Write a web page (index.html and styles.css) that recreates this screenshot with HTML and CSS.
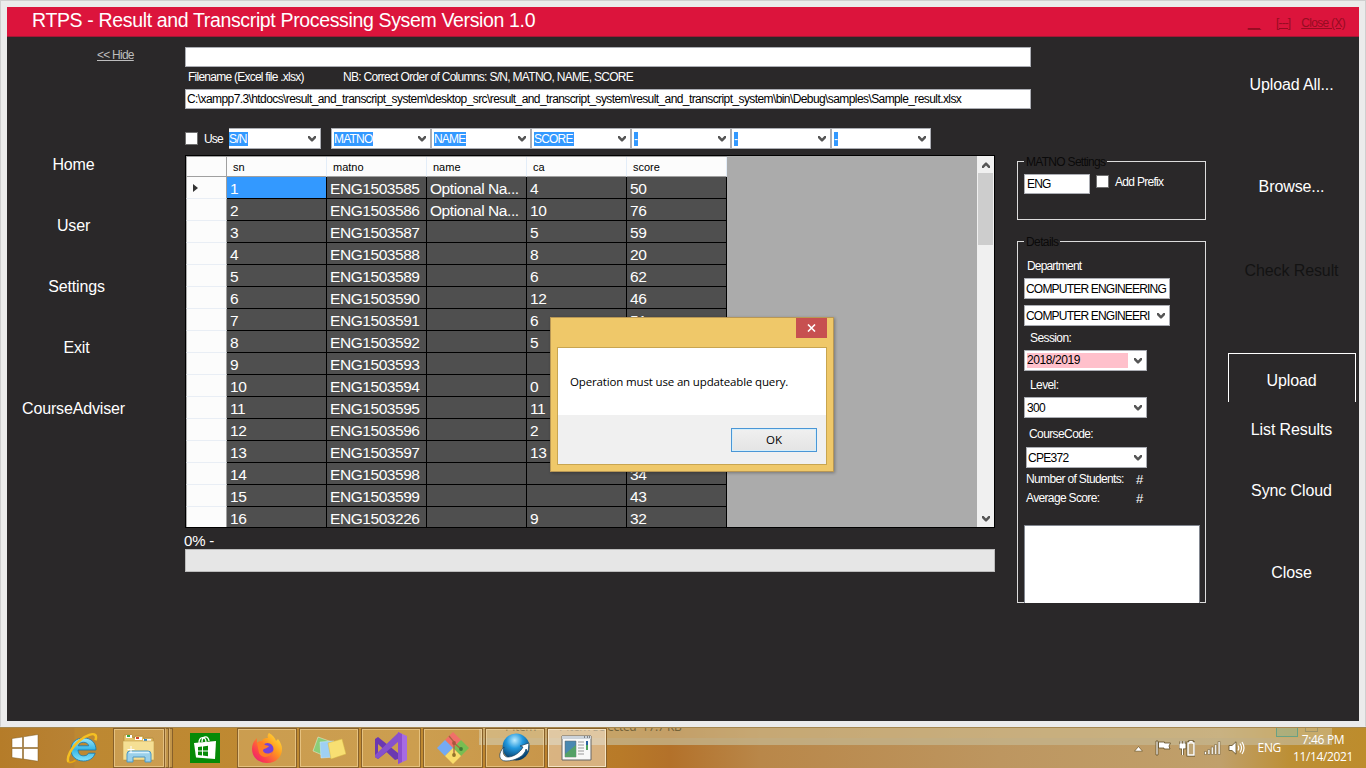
FILE: index.html
```html
<!DOCTYPE html>
<html lang="en">
<head>
<meta charset="utf-8">
<title>RTPS</title>
<link rel="stylesheet" href="styles.css">
</head>
<body>
<svg width="0" height="0" class="defs"><symbol id="chev" viewBox="0 0 8 6"><path d="M0 0h1.600L4 2.500 6.400 0H8v2L4.600 5.400H3.400L0 2z" fill="#555"/></symbol></svg>
<div class="window">
  <header class="titlebar">
    <h1 class="title">RTPS - Result and Transcript Processing Sysem Version 1.0</h1>
    <div class="winlinks"><a class="min">__</a><a class="max">[---]</a><a class="cls">Close (X)</a></div>
  </header>
  <div class="content">
    <nav class="nav">
      <a class="hide">&lt;&lt; Hide</a>
      <a class="navitem">Home</a>
      <a class="navitem">User</a>
      <a class="navitem shift">Settings</a>
      <a class="navitem shift">Exit</a>
      <a class="navitem">CourseAdviser</a>
    </nav>
    <main class="main">
      <div class="field"></div>
      <div class="labels"><span class="fn">Filename (Excel file .xlsx)</span><span class="nb">NB: Correct Order of Columns: S/N, MATNO, NAME, SCORE</span></div>
      <div class="field path">C:\xampp7.3\htdocs\result_and_transcript_system\desktop_src\result_and_transcript_system\result_and_transcript_system\bin\Debug\samples\Sample_result.xlsx</div>
      <div class="columns">
        <section class="left">
          <div class="mapping">
            <i class="check"></i><span class="use">Use</span>
            <div class="combo first"><mark>S/N</mark><svg class="chev"><use href="#chev"/></svg></div>
            <div class="combo"><mark>MATNO</mark><svg class="chev"><use href="#chev"/></svg></div>
            <div class="combo"><mark>NAME</mark><svg class="chev"><use href="#chev"/></svg></div>
            <div class="combo"><mark>SCORE</mark><svg class="chev"><use href="#chev"/></svg></div>
            <div class="combo"><mark>-</mark><svg class="chev"><use href="#chev"/></svg></div>
            <div class="combo"><mark>-</mark><svg class="chev"><use href="#chev"/></svg></div>
            <div class="combo"><mark>-</mark><svg class="chev"><use href="#chev"/></svg></div>
          </div>
          <div class="datagrid">
            <div class="rows">
              <div class="row head"><b></b><span>sn</span><span>matno</span><span>name</span><span>ca</span><span>score</span></div>
              <div class="row"><b><svg width="5" height="8" viewBox="0 0 5 8"><path d="M0 0l5 4-5 4z" fill="#333"/></svg></b><span class="sel">1</span><span>ENG1503585</span><span>Optional Na...</span><span>4</span><span>50</span></div>
              <div class="row"><b></b><span>2</span><span>ENG1503586</span><span>Optional Na...</span><span>10</span><span>76</span></div>
              <div class="row"><b></b><span>3</span><span>ENG1503587</span><span></span><span>5</span><span>59</span></div>
              <div class="row"><b></b><span>4</span><span>ENG1503588</span><span></span><span>8</span><span>20</span></div>
              <div class="row"><b></b><span>5</span><span>ENG1503589</span><span></span><span>6</span><span>62</span></div>
              <div class="row"><b></b><span>6</span><span>ENG1503590</span><span></span><span>12</span><span>46</span></div>
              <div class="row"><b></b><span>7</span><span>ENG1503591</span><span></span><span>6</span><span>51</span></div>
              <div class="row"><b></b><span>8</span><span>ENG1503592</span><span></span><span>5</span><span></span></div>
              <div class="row"><b></b><span>9</span><span>ENG1503593</span><span></span><span></span><span></span></div>
              <div class="row"><b></b><span>10</span><span>ENG1503594</span><span></span><span>0</span><span></span></div>
              <div class="row"><b></b><span>11</span><span>ENG1503595</span><span></span><span>11</span><span></span></div>
              <div class="row"><b></b><span>12</span><span>ENG1503596</span><span></span><span>2</span><span></span></div>
              <div class="row"><b></b><span>13</span><span>ENG1503597</span><span></span><span>13</span><span></span></div>
              <div class="row"><b></b><span>14</span><span>ENG1503598</span><span></span><span></span><span>34</span></div>
              <div class="row"><b></b><span>15</span><span>ENG1503599</span><span></span><span></span><span>43</span></div>
              <div class="row"><b></b><span>16</span><span>ENG1503226</span><span></span><span>9</span><span>32</span></div>
            </div>
            <div class="scroll">
              <svg class="chev up"><use href="#chev"/></svg>
              <div class="thumb"></div>
              <svg class="chev down"><use href="#chev"/></svg>
            </div>
          </div>
          <div class="status">0% -</div>
          <div class="progress"></div>
        </section>
        <aside class="side">
          <div class="group matno">
            <span class="legend">MATNO Settings</span>
            <div class="field eng">ENG</div><i class="check"></i><span class="prefix">Add Prefix</span>
          </div>
          <div class="group details">
            <span class="legend">Details</span>
            <label class="lbl dept">Department</label>
            <div class="combo wide">COMPUTER ENGINEERING</div>
            <div class="combo wide second"><span class="cut">COMPUTER ENGINEERI</span><svg class="chev"><use href="#chev"/></svg></div>
            <label class="lbl in">Session:</label>
            <div class="combo mid"><span class="pink">2018/2019</span><svg class="chev"><use href="#chev"/></svg></div>
            <label class="lbl in level">Level:</label>
            <div class="combo mid"><span class="num">300</span><svg class="chev"><use href="#chev"/></svg></div>
            <label class="lbl in code">CourseCode:</label>
            <div class="combo mid course"><span class="num">CPE372</span><svg class="chev"><use href="#chev"/></svg></div>
            <div class="stat"><span class="stu">Number of Students:</span><span class="hash">#</span></div>
            <div class="stat"><span>Average Score:</span><span class="hash">#</span></div>
            <div class="memo"></div>
          </div>
        </aside>
      </div>
    </main>
    <div class="actions">
      <a class="act a1">Upload All...</a>
      <a class="act a2">Browse...</a>
      <a class="act a3">Check Result</a>
      <a class="act a4">Upload</a>
      <a class="act a5">List Results</a>
      <a class="act a6">Sync Cloud</a>
      <a class="act a7">Close</a>
    </div>
  </div>
</div>

<div class="dialog">
  <div class="dlgbar"><div class="dlgx"><svg width="9" height="8" viewBox="0 0 9 8"><path d="M1 .5l7 7M8 .5l-7 7" stroke="#fff" stroke-width="1.600"/></svg></div></div>
  <div class="dlgbody">
    <div class="msg">Operation must use an updateable query.</div>
    <div class="dlgfoot"><button class="ok">OK</button></div>
  </div>
</div>

<footer class="taskbar">
  <div class="ghost"><span class="g1">1 item</span><span class="g2">1 item selected&nbsp; 17.7 KB</span><i class="gv"></i><i class="gl"></i></div>
  <div class="task start"><svg width="28" height="28" viewBox="0 0 28 28"><path d="M1 4.500L11.500 3v10.500H1zM12.500 2.800L27 .5v13H12.500zM1 14.500h10.500V25L1 23.500zM12.500 14.500H27v12.800l-14.500-2.200z" fill="#fff" stroke="#7d5a20" stroke-width=".5"/></svg></div>
  <div class="task ie"><svg width="32" height="32" viewBox="0 0 32 32"><defs><linearGradient id="ieg" x2="0" y2="1"><stop stop-color="#9be6fa"/><stop offset=".5" stop-color="#35b5e6"/><stop offset="1" stop-color="#86e2fa"/></linearGradient></defs><path d="M30 18H12c.4 4 2.200 5.800 5.500 5.800 2.500 0 4-.8 5-2.600h6.700c-1.700 5-6 7.800-11.700 7.800C10 29 5 24.300 5 17.500S10 6 17.500 6C25.500 6 30 10.800 30 18zM12.200 13.800h10.500c-.6-2.300-2.400-3.500-5.200-3.500s-4.700 1.200-5.300 3.500z" fill="url(#ieg)" stroke="#1777ad" stroke-width=".8"/><path d="M2.500 30C.2 26 5 15.500 14 8.200 20.500 3 27 .8 29.200 3c1 1 1 3 .2 5.200" fill="none" stroke="#f5c022" stroke-width="2.500"/><path d="M2.500 30c1.400 1 4 .3 7-1.600" fill="none" stroke="#e9a80d" stroke-width="1.700"/></svg></div>
  <div class="task btn exp"><svg width="34" height="32" viewBox="0 0 34 32"><path d="M2 5V3h8l1 3h2V4h8l1 3 1-1h8v22H2z" fill="#e5c36b" stroke="#a88537" stroke-width=".6"/><path d="M4 3h6v3H4z" fill="#fff"/><path d="M5 3h3v2H5z" fill="#35a845"/><path d="M13 5h7v3h-7z" fill="#fff"/><path d="M14 5h3v2h-3z" fill="#d4462c"/><path d="M21 7h8v3h-8z" fill="#fff"/><path d="M22 7h3v2h-3z" fill="#2e8ad0"/><path d="M1 9h31v19H1z" fill="#f5df94" stroke="#c29f4c" stroke-width=".6"/><path d="M5 30V22q0-3 3-3h18q3 0 3 3v8h-6v-5H11v5z" fill="#9ad0ea" stroke="#4c97c2" stroke-width="1"/><path d="M7 20.500h20" stroke="#d9f2fc" stroke-width="1.500"/><path d="M9 14v7M5.500 17.500h7" stroke="#fff" stroke-width="1"/></svg></div><i class="stack"></i><i class="stack"></i>
  <div class="task store"><svg width="30" height="30" viewBox="0 0 30 30"><path d="M0 0h30v30H0z" fill="#068a07"/><path d="M4 10l22-2-1 18L6 24.500z" fill="#fff"/><path d="M9 10c0-7 7-7 7-1M12 9c0-6 6-7 7-1" fill="none" stroke="#fff" stroke-width="1.300"/><path d="M8 14l4-.5v4H8zM13 13.400l5-.6v4.700h-5zM8 18.500h4v4l-4-.5zM13 18.500h5v4.700l-5-.6z" fill="#068a07"/></svg></div>
  <div class="task btn ff"><svg width="32" height="32" viewBox="0 0 32 32"><defs><linearGradient id="ffg" x1="1" x2="0" y2="1"><stop stop-color="#fff044"/><stop offset=".4" stop-color="#ff9a1e"/><stop offset=".75" stop-color="#fb3b50"/><stop offset="1" stop-color="#e31587"/></linearGradient></defs><path d="M18 1c4 2 6 5 7 8l2-2c3 4 4 7 4 10 0 8-6 14-15 14S1 25 1 17c0-5 2-8 5-11v5c2-2 3-2 5-2 1-3 4-3 6-3-1-2 0-4 1-5z" fill="url(#ffg)"/><circle cx="16.500" cy="17" r="6" fill="#7542d9"/><path d="M6 11c3-2 6-1 8 2l4 1c-2 3-5 2-6 4 0 4 6 5 10 1-2 7-11 8-14 2" fill="#ff7d25"/></svg></div>
  <div class="task btn"><svg width="34" height="30" viewBox="0 0 34 30"><path d="M6 4l14 5-5 15L1 18z" fill="#8bcd78" stroke="#fff" stroke-width=".4"/><path d="M8 9l14-1 1 16-14 1z" fill="#9fd0f3" stroke="#cdeafb" stroke-width=".5"/><path d="M16 10l14-4 4 15-15 5z" fill="#f8df72" stroke="#d7b746" stroke-width=".5"/></svg></div>
  <div class="task btn"><svg width="32" height="32" viewBox="0 0 32 32"><path d="M0 7l3-2 20 16v6l-3 1L3 12v9l6-5 4 3L3 27l-3-2z" fill="#6b38b0"/><path d="M23 1v9L3 27l-3-2v-2z" fill="#8651cc"/><path d="M23 0l9 4v24l-9 4z" fill="#a66be4"/><path d="M23 0l4 2v28l-4 2z" fill="#8c4ed0"/></svg></div>
  <div class="task btn"><svg width="32" height="32" viewBox="0 0 32 32"><path d="M16 0l8 8-8 8-8-8z" fill="#f16f69"/><path d="M8 8l8 8-8 8-8-8z" fill="#75aaf3"/><path d="M24 8l8 8-8 8-8-8z" fill="#78bd52"/><path d="M16 16l8 8-8 8-8-8z" fill="#f9dc6b"/><path d="M12 4l5 6v13M17 11l7 6" fill="none" stroke="#a8653f" stroke-width="1.300"/><circle cx="17" cy="11" r="1.900" fill="#a8553f"/><circle cx="24" cy="17" r="1.900" fill="#417b34"/><circle cx="17" cy="23" r="1.900" fill="#93742a"/></svg></div>
  <div class="task btn"><svg width="32" height="30" viewBox="0 0 32 30"><defs><radialGradient id="glo" cx=".45" cy=".25" r=".75"><stop stop-color="#bcecff"/><stop offset=".4" stop-color="#2299df"/><stop offset="1" stop-color="#03355e"/></radialGradient></defs><circle cx="17" cy="14" r="13.500" fill="url(#glo)"/><path d="M5 14C-1 20-1 28 7 28c9 0 19-5 20-12l2 3 1-9-9 3 3 1c-3 6-10 10-15 10-4 0-6-4-4-10z" fill="#fff" stroke="#173d59" stroke-width=".7"/></svg></div>
  <div class="task btn active"><svg width="32" height="28" viewBox="0 0 32 28"><path d="M1 2h29v24H1z" fill="#f9f9f9" stroke="#666" stroke-width="1"/><path d="M1 2h29v3H1z" fill="#ccd3db"/><path d="M23 3h1m2 0h1m1 0h1" stroke="#333"/><path d="M4 7h11v16H4z" fill="#4988b1" stroke="#666" stroke-width=".5"/><path d="M4 20L15 11v12H4z" fill="#55a067"/><path d="M17 8h6m-6 3h6m-6 3h6m-6 3h6m-6 3h6" stroke="#999"/><path d="M25 7h2v8h-2z" fill="#2962a0"/><path d="M25 11h2v5h-2z" fill="#4fa45d"/></svg></div>
  <div class="tray">
    <svg class="arr" width="9" height="6" viewBox="0 0 9 6"><path d="M4.500 .5l4 4.700h-8z" fill="#fff" stroke="#6c5525" stroke-width=".7"/></svg>
    <svg class="flag" width="17" height="16" viewBox="0 0 17 16"><path d="M1 1h2v14H1zM3.500 2h6v1h6l-1.500 3 1 3H9V8H3.500z" fill="#fff" stroke="#5f4c24" stroke-width=".8"/></svg>
    <svg class="bat" width="16" height="17" viewBox="0 0 16 17"><path d="M1 4h5v4H1zM2 1v3m3-3v3M3.500 8v7" fill="#fff" stroke="#5f4c24" stroke-width="2.600"/><path d="M1 4h5v4H1zM2 1v3m3-3v3M3.500 8v7" fill="#fff" stroke="#fff" stroke-width="1.200"/><path d="M9 3h2V1.500h2V3h2v12H9z" fill="none" stroke="#5f4c24" stroke-width="3"/><path d="M9 3h2V1.500h2V3h2v12H9z" fill="#bfa576" stroke="#fff" stroke-width="1.500"/></svg>
    <svg class="sig" width="17" height="14" viewBox="0 0 17 14"><path d="M.5 10.500h2v3h-2zM3.900 8.500h2v5h-2zM7.300 6h2v7.500h-2zM10.700 3.500h2v10h-2zM14.100 .5h2v13h-2z" fill="#fff" stroke="#5f4c24" stroke-width=".5"/></svg>
    <svg class="snd" width="17" height="14" viewBox="0 0 17 14"><path d="M1 4.500h3L8 .8v12.400L4 9.500H1z" fill="#fff" stroke="#5f4c24" stroke-width=".8"/><path d="M10 4.500q1.500 2.500 0 5M12 2.500q3 4.500 0 9M14 1q4 6 0 12" fill="none" stroke="#fff" stroke-width="1.200"/></svg>
    <span class="lang">ENG</span>
    <div class="clock"><span class="time">7:46 PM</span><span class="date">11/14/2021</span></div>
  </div>
</footer>
</body>
</html>
```
FILE: styles.css
```css
* { box-sizing: border-box; }
body { margin: 0; width: 1366px; height: 768px; overflow: hidden; position: relative; background: #ebebeb; font-family: "Liberation Sans", Arial, sans-serif; font-size: 12px; line-height: 14px; color: #fff; letter-spacing: -0.6px; }
.defs { position: absolute; }
.window { height: 727px; padding: 6px 6px 5px; border: 1px solid #cfcfcf; border-bottom-color: #ebebeb; background: #ebebeb; display: flex; flex-direction: column; }
.titlebar { height: 30px; background: #dc143c; border-bottom: 1px solid #a31734; display: flex; justify-content: space-between; }
.title { margin: 0; padding: 2px 0 0 25px; font-size: 19.5px; line-height: 22px; font-weight: 400; letter-spacing: -0.35px; white-space: nowrap; }
.winlinks { display: flex; padding: 9px 14px 0 0; color: #960c22; text-decoration: underline; letter-spacing: -0.5px; }
.winlinks .min { margin-right: 16px; }
.winlinks .max { margin-right: 11px; letter-spacing: -0.9px; }
.winlinks .cls { letter-spacing: -0.7px; }
.content { flex: 1; background: #2a2829; display: flex; }

.nav { width: 178px; display: flex; flex-direction: column; font-size: 16px; letter-spacing: -0.15px; }
.hide { padding-left: 90px; margin: 11px 0 79px; font-size: 12px; letter-spacing: -0.75px; color: #bdbdbd; text-decoration: underline; }
.navitem { width: 133px; height: 48px; margin-bottom: 13px; line-height: 48px; text-align: center; }
.shift { padding-left: 6px; }

.main { width: 1028px; padding-top: 10px; }
.field { width: 846px; height: 20px; background: #fff; border: 1px solid #abadb3; color: #000; padding-left: 2px; line-height: 18px; white-space: nowrap; }
.path { letter-spacing: -0.59px; padding-left: 1px; }
.labels { height: 22px; line-height: 20px; display: flex; padding-left: 3px; white-space: nowrap; }
.fn { width: 155px; letter-spacing: -0.75px; }
.nb { letter-spacing: -0.7px; }
.columns { display: flex; padding-top: 19px; }
.left { width: 810px; }
.mapping { height: 21px; display: flex; align-items: center; margin-bottom: 6px; width: 746px; }
.check { width: 13px; height: 13px; background: #fff; border: 1px solid #707070; margin-top: -1px; flex: none; }
.use { width: 28px; padding-left: 6px; letter-spacing: -0.8px; }
.combo { width: 100px; height: 21px; background: #fff; border: 1px solid #abadb3; color: #000; display: flex; align-items: center; justify-content: space-between; padding: 0 4px 0 2px; white-space: nowrap; line-height: 14px; flex: none; letter-spacing: -0.8px; }
.combo.first { width: 92px; margin-right: 10px; margin-left: 3px; border-left: 0; padding-left: 0; }
.combo mark { background: #3399ff; color: #fff; padding-right: 1px; }
.chev { width: 8px; height: 6px; display: block; flex: none; margin-top: 1px; }

.datagrid { height: 373px; border: 1px solid #000; background: #ababab; display: flex; justify-content: space-between; overflow: hidden; }
.rows { width: 541px; }
.row { display: flex; height: 22px; font-size: 15.5px; line-height: 23px; letter-spacing: -0.44px; }
.row b { width: 41px; border-left: 1px solid #aaa; border-right: 1px solid #a0a0a0; border-bottom: 1px solid #e9eef5; background: #fcfcfc; display: flex; align-items: center; padding-left: 6px; }
.row span { width: 100px; padding-left: 3px; background: #4f4f4f; border-right: 1px solid #000; border-bottom: 1px solid #000; overflow: hidden; white-space: nowrap; }
.row .sel { background: #3399ff; }
.row.head { height: 21px; border-top: 1px solid #a0a0a0; font-size: 11px; line-height: 21px; letter-spacing: 0; color: #000; }
.head b, .row.head span { background: #fcfcfc; border-bottom: 1px solid #a0a0a0; }
.row.head span { border-right: 1px solid #e3edf8; padding-left: 6px; }
.scroll { width: 17px; background: #f0f0f0; display: flex; flex-direction: column; align-items: center; }
.scroll .up { transform: rotate(180deg); margin: 6px 0 5px; }
.thumb { width: 15px; height: 72px; background: #cdcdcd; }
.scroll .down { margin-top: auto; margin-bottom: 5px; }
.status { height: 21px; line-height: 26px; font-size: 15px; letter-spacing: -0.2px; margin-left: -1px; }
.progress { height: 23px; background: #e6e6e6; border: 1px solid #bcbcbc; }

.side { width: 189px; margin-left: 22px; padding-top: 33px; }
.group { position: relative; border: 1px solid #dcdcdc; }
.legend { position: absolute; left: 6px; top: -7px; padding: 0 2px; background: #2a2829; color: #0a0a0a; white-space: nowrap; }
.matno { height: 59px; display: flex; padding: 12px 6px; margin-bottom: 21px; }
.matno .legend { letter-spacing: -0.7px; }
.eng { width: 66px; margin-right: 6px; letter-spacing: -0.8px; }
.matno .check { margin-top: 1px; }
.prefix { padding-left: 6px; line-height: 16px; letter-spacing: -0.7px; }
.details { height: 362px; padding: 17px 5px 0 6px; display: flex; flex-direction: column; }
.lbl { height: 24px; line-height: 24px; flex: none; }
.dept { padding-left: 3px; height: 19px; line-height: 14px; letter-spacing: -0.85px; }
.wide { width: 146px; padding-left: 1px; }
.second { margin-top: 6px; }
.in { padding-left: 6px; }
.mid { width: 123px; }
.level { height: 26px; line-height: 28px; }
.code { height: 29px; line-height: 32px; padding-left: 5px; }
.course { margin-left: 2px; width: 121px; margin-bottom: 2px; padding-left: 1px; }
.pink { background: #ffc0cb; width: 101px; line-height: 15px; letter-spacing: -0.4px; }
.num { letter-spacing: -0.7px; }
.stat { height: 19px; line-height: 19px; display: flex; padding-left: 2px; flex: none; letter-spacing: -0.65px; }
.stat span:first-child { width: 110px; }
.hash { font-size: 13px; }
.memo { height: 78px; width: 176px; margin-top: 17px; flex: none; background: #fff; border: 1px solid #828790; border-bottom: 0; }

.actions { flex: 1; display: flex; flex-direction: column; align-items: center; padding: 27px 0 0 11px; font-size: 16px; letter-spacing: -0.1px; }
.act { height: 40px; line-height: 41px; white-space: nowrap; }
.a2 { margin-top: 62px; }
.a3 { margin-top: 44px; color: #131313; }
.a4 { margin-top: 63px; width: 128px; height: 49px; border: 1px solid #fff; border-bottom: 0; text-align: center; line-height: 53px; }
.a5 { margin-top: 7px; }
.a6 { margin-top: 21px; }
.a7 { margin-top: 42px; }

.dialog { position: absolute; left: 550px; top: 317px; width: 284px; height: 155px; border: 1px solid #b89755; background: #efc869; box-shadow: 1px 1px 3px rgba(0,0,0,.3); padding: 0 6px 6px; color: #000; font-family: "Open Sans", "Noto Sans", sans-serif; font-size: 11.5px; letter-spacing: -0.15px; }
.dlgbar { height: 29px; display: flex; justify-content: flex-end; }
.dlgx { width: 31px; height: 20px; background: #c75050; display: flex; align-items: center; justify-content: center; }
.dlgbody { height: 118px; border: 1px solid #c8a550; background: #fff; display: flex; flex-direction: column; }
.msg { height: 67px; line-height: 68px; padding-left: 12px; white-space: nowrap; }
.dlgfoot { flex: 1; background: #f0f0f0; display: flex; justify-content: flex-end; padding: 13px 9px 0 0; }
.ok { width: 86px; height: 24px; border: 1px solid #4a96d6; background: linear-gradient(#f0f0f0, #e4e4e4); box-shadow: inset 0 0 0 1px #d5eefa; font: inherit; padding: 0; color: #000; }

.taskbar { position: relative; height: 41px; border-top: 1px solid #a58750; display: flex; align-items: center; overflow: hidden; background: linear-gradient(90deg, #b57c29 0, #b88234 74px, #bd8832 75px, #c08a31 420px, #b87a28 620px, #b3712a 670px, #b98749 760px, #bd9660 1000px, #c0a06b 1220px, #bc8f35 1290px, #bd8c2c 1366px); font-family: "Open Sans", "Noto Sans", sans-serif; font-size: 12px; letter-spacing: -0.35px; }
.ghost { position: absolute; left: 479px; top: 0; width: 853px; height: 17px; background: rgba(206,190,145,.6); color: #746238; border-bottom: 7px solid rgba(190,174,135,.5); overflow: hidden; line-height: 14px; }
.g1, .g2 { position: absolute; top: -8px; left: 24px; white-space: nowrap; }
.g2 { left: 78px; }
.gv, .gl { position: absolute; left: 797px; top: -2px; width: 22px; height: 11px; border: 1px solid #69a184; background: rgba(135,180,145,.4); }
.gl { left: 826px; width: 13px; height: 6px; border-color: #a09468; background: none; }
.task { height: 40px; display: flex; align-items: center; justify-content: center; position: relative; flex: none; }
.start { width: 50px; }
.ie { width: 63px; }
.btn { width: 60px; margin-right: 2px; background: rgba(255,240,200,.2); border: 1px solid #87602a; box-shadow: inset 0 0 0 1px rgba(255,230,175,.5); }
.exp { width: 52px; margin: 0; }
.stack { width: 4px; height: 40px; border: 1px solid #87602a; border-left-color: #d9b273; background: #c29549; }
.store { width: 48px; margin: 0 8px 0 8px; }
.active { background: rgba(255,245,235,.45); box-shadow: inset 0 0 0 1px #f5e4c4; }
.tray { margin-left: auto; display: flex; align-items: center; height: 40px; padding-right: 14px; position: relative; }
.arr { margin-top: 2px; }
.flag { margin-left: 12px; }
.bat { margin-left: 7px; }
.sig { margin-left: 9px; }
.snd { margin-left: 7px; }
.lang { margin-left: 13px; }
.clock { display: flex; flex-direction: column; align-items: center; margin-left: 13px; line-height: 17px; width: 58px; white-space: nowrap; }
```
